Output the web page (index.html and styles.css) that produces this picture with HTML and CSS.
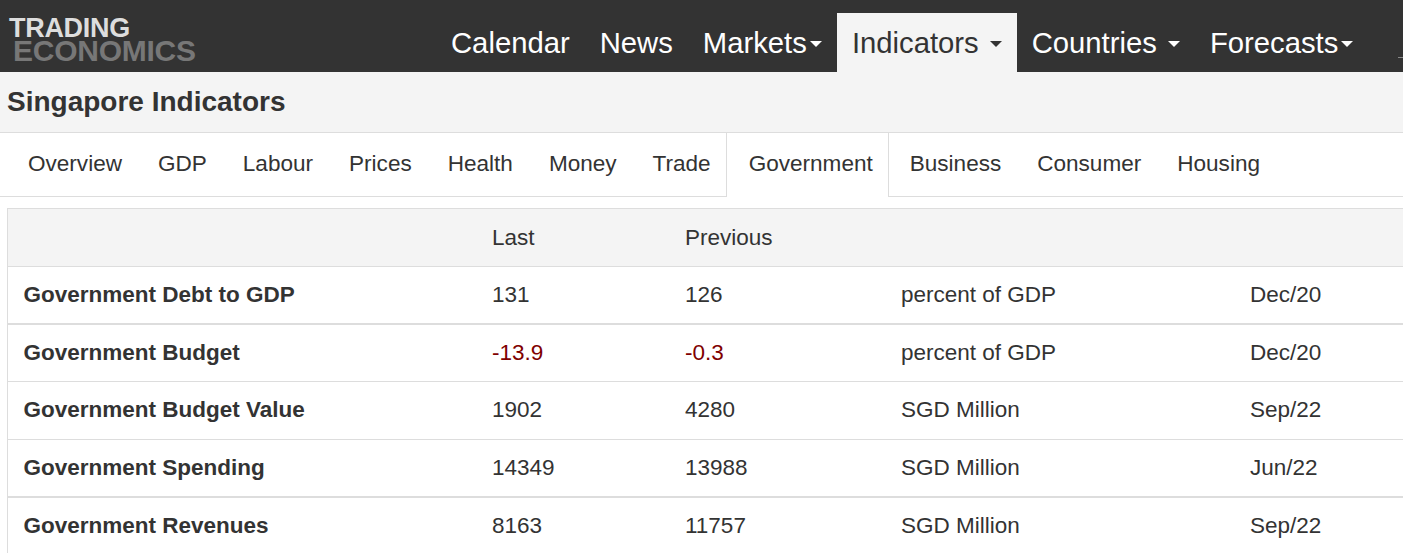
FILE: index.html
```html
<!DOCTYPE html>
<html lang="en">
<head>
    <meta charset="UTF-8">
    <meta name="viewport" content="width=device-width, initial-scale=1.0">
    <title>Singapore Indicators</title>
    <link rel="stylesheet" href="styles.css">
</head>
<body>
    <nav class="navbar">
        <a class="logo" href="#">
            <span class="logo-top">TRADING</span>
            <span class="logo-bottom">ECONOMICS</span>
        </a>
        <ul class="nav-links">
            <li><a href="#">Calendar</a></li>
            <li><a href="#">News</a></li>
            <li><a href="#">Markets<span class="caret caret-tight"></span></a></li>
            <li class="active"><a href="#">Indicators<span class="caret"></span></a></li>
            <li><a href="#">Countries<span class="caret"></span></a></li>
            <li><a href="#">Forecasts<span class="caret caret-tight"></span></a></li>
        </ul>
        <span class="nav-tail"></span>
    </nav>
    <header class="page-title">
        <h1>Singapore Indicators</h1>
    </header>
    <ul class="tabs">
        <li><a href="#">Overview</a></li>
        <li><a href="#">GDP</a></li>
        <li><a href="#">Labour</a></li>
        <li><a href="#">Prices</a></li>
        <li><a href="#">Health</a></li>
        <li><a href="#">Money</a></li>
        <li><a href="#">Trade</a></li>
        <li class="active"><a href="#">Government</a></li>
        <li><a href="#">Business</a></li>
        <li><a href="#">Consumer</a></li>
        <li><a href="#">Housing</a></li>
    </ul>
    <div class="table-wrap">
        <table class="indicators">
            <thead>
                <tr>
                    <th class="col-name"></th>
                    <th class="col-last">Last</th>
                    <th class="col-prev">Previous</th>
                    <th class="col-unit"></th>
                    <th class="col-date"></th>
                </tr>
            </thead>
            <tbody>
                <tr class="thick">
                    <td class="name">Government Debt to GDP</td>
                    <td>131</td>
                    <td>126</td>
                    <td>percent of GDP</td>
                    <td>Dec/20</td>
                </tr>
                <tr class="short">
                    <td class="name">Government Budget</td>
                    <td class="neg">-13.9</td>
                    <td class="neg">-0.3</td>
                    <td>percent of GDP</td>
                    <td>Dec/20</td>
                </tr>
                <tr>
                    <td class="name">Government Budget Value</td>
                    <td>1902</td>
                    <td>4280</td>
                    <td>SGD Million</td>
                    <td>Sep/22</td>
                </tr>
                <tr class="thick">
                    <td class="name">Government Spending</td>
                    <td>14349</td>
                    <td>13988</td>
                    <td>SGD Million</td>
                    <td>Jun/22</td>
                </tr>
                <tr>
                    <td class="name">Government Revenues</td>
                    <td>8163</td>
                    <td>11757</td>
                    <td>SGD Million</td>
                    <td>Sep/22</td>
                </tr>
            </tbody>
        </table>
    </div>
</body>
</html>
```

FILE: styles.css
```css
html, body {
    height: 553px;
    overflow: hidden;
}
body {
    margin: 0;
    font-family: "Liberation Sans", Arial, sans-serif;
    color: #333;
    background-color: #fff;
}
a {
    color: inherit;
    text-decoration: none;
}
ul {
    list-style: none;
    margin: 0;
    padding: 0;
}
.navbar {
    display: flex;
    height: 72px;
    background-color: #333;
}
.logo {
    display: flex;
    flex-direction: column;
    width: 436px;
    padding: 17px 0 0 9px;
    box-sizing: border-box;
    font-weight: bold;
}
.logo-top {
    font-size: 27px;
    line-height: 22px;
    letter-spacing: -0.3px;
    color: #ddd;
}
.logo-bottom {
    margin-left: 4px;
    font-size: 30px;
    line-height: 23px;
    letter-spacing: -0.25px;
    color: #777;
}
.nav-links {
    display: flex;
    align-items: flex-end;
    height: 72px;
}
.nav-links a {
    display: flex;
    align-items: center;
    height: 57px;
    padding: 2px 15px 0;
    font-size: 29.25px;
    color: #fff;
}
.nav-links .active a {
    background-color: #f4f4f4;
    color: #333;
}
.caret {
    width: 0;
    height: 0;
    margin-left: 11px;
    margin-top: 1px;
    border-top: 6px solid currentColor;
    border-left: 6px solid transparent;
    border-right: 6px solid transparent;
}
.caret-tight {
    margin-left: 3px;
}
.nav-tail {
    position: absolute;
    top: 57px;
    right: 0;
    width: 5px;
    height: 1px;
    background-color: #888;
}
.page-title {
    height: 60px;
    background-color: #f4f4f4;
    border-bottom: 1px solid #ddd;
    display: flex;
    align-items: center;
    padding-left: 7px;
}
.page-title h1 {
    margin: 0;
    font-size: 28px;
    font-weight: bold;
}
.tabs {
    display: flex;
    height: 63px;
    padding-left: 10px;
    border-bottom: 1px solid #ddd;
    font-size: 22.55px;
}
.tabs a {
    display: flex;
    align-items: center;
    height: 61px;
    padding: 0 18px;
}
.tabs li.active {
    margin: 0 2.5px 0 -3px;
    height: 64px;
    background-color: #fff;
    border-left: 1px solid #ddd;
    border-right: 1px solid #ddd;
}
.tabs .active a {
    padding: 0 15.5px 0 22px;
}
.table-wrap {
    margin: 11px 0 0 7px;
    width: 1500px;
    border: 1px solid #ddd;
    border-bottom: none;
}
.indicators {
    width: 100%;
    table-layout: fixed;
    border-collapse: collapse;
    font-size: 22.5px;
}
.indicators th, .indicators td {
    padding: 0;
    text-align: left;
    font-weight: normal;
}
.indicators th {
    height: 57px;
    background-color: #f4f4f4;
}
.indicators td {
    height: 56px;
    padding-bottom: 1px;
    border-top: 1px solid #ddd;
}
.indicators tr.thick td {
    height: 55px;
    border-bottom: 2px solid #ddd;
}
.indicators tr.short td {
    height: 56px;
    padding-bottom: 0;
}
.col-name { width: 484px; }
.col-last { width: 193px; }
.col-prev { width: 216px; }
.col-unit { width: 349px; }
.indicators td.name {
    padding-left: 15.5px;
    font-weight: bold;
}
.indicators td.neg {
    color: #800000;
}
```
